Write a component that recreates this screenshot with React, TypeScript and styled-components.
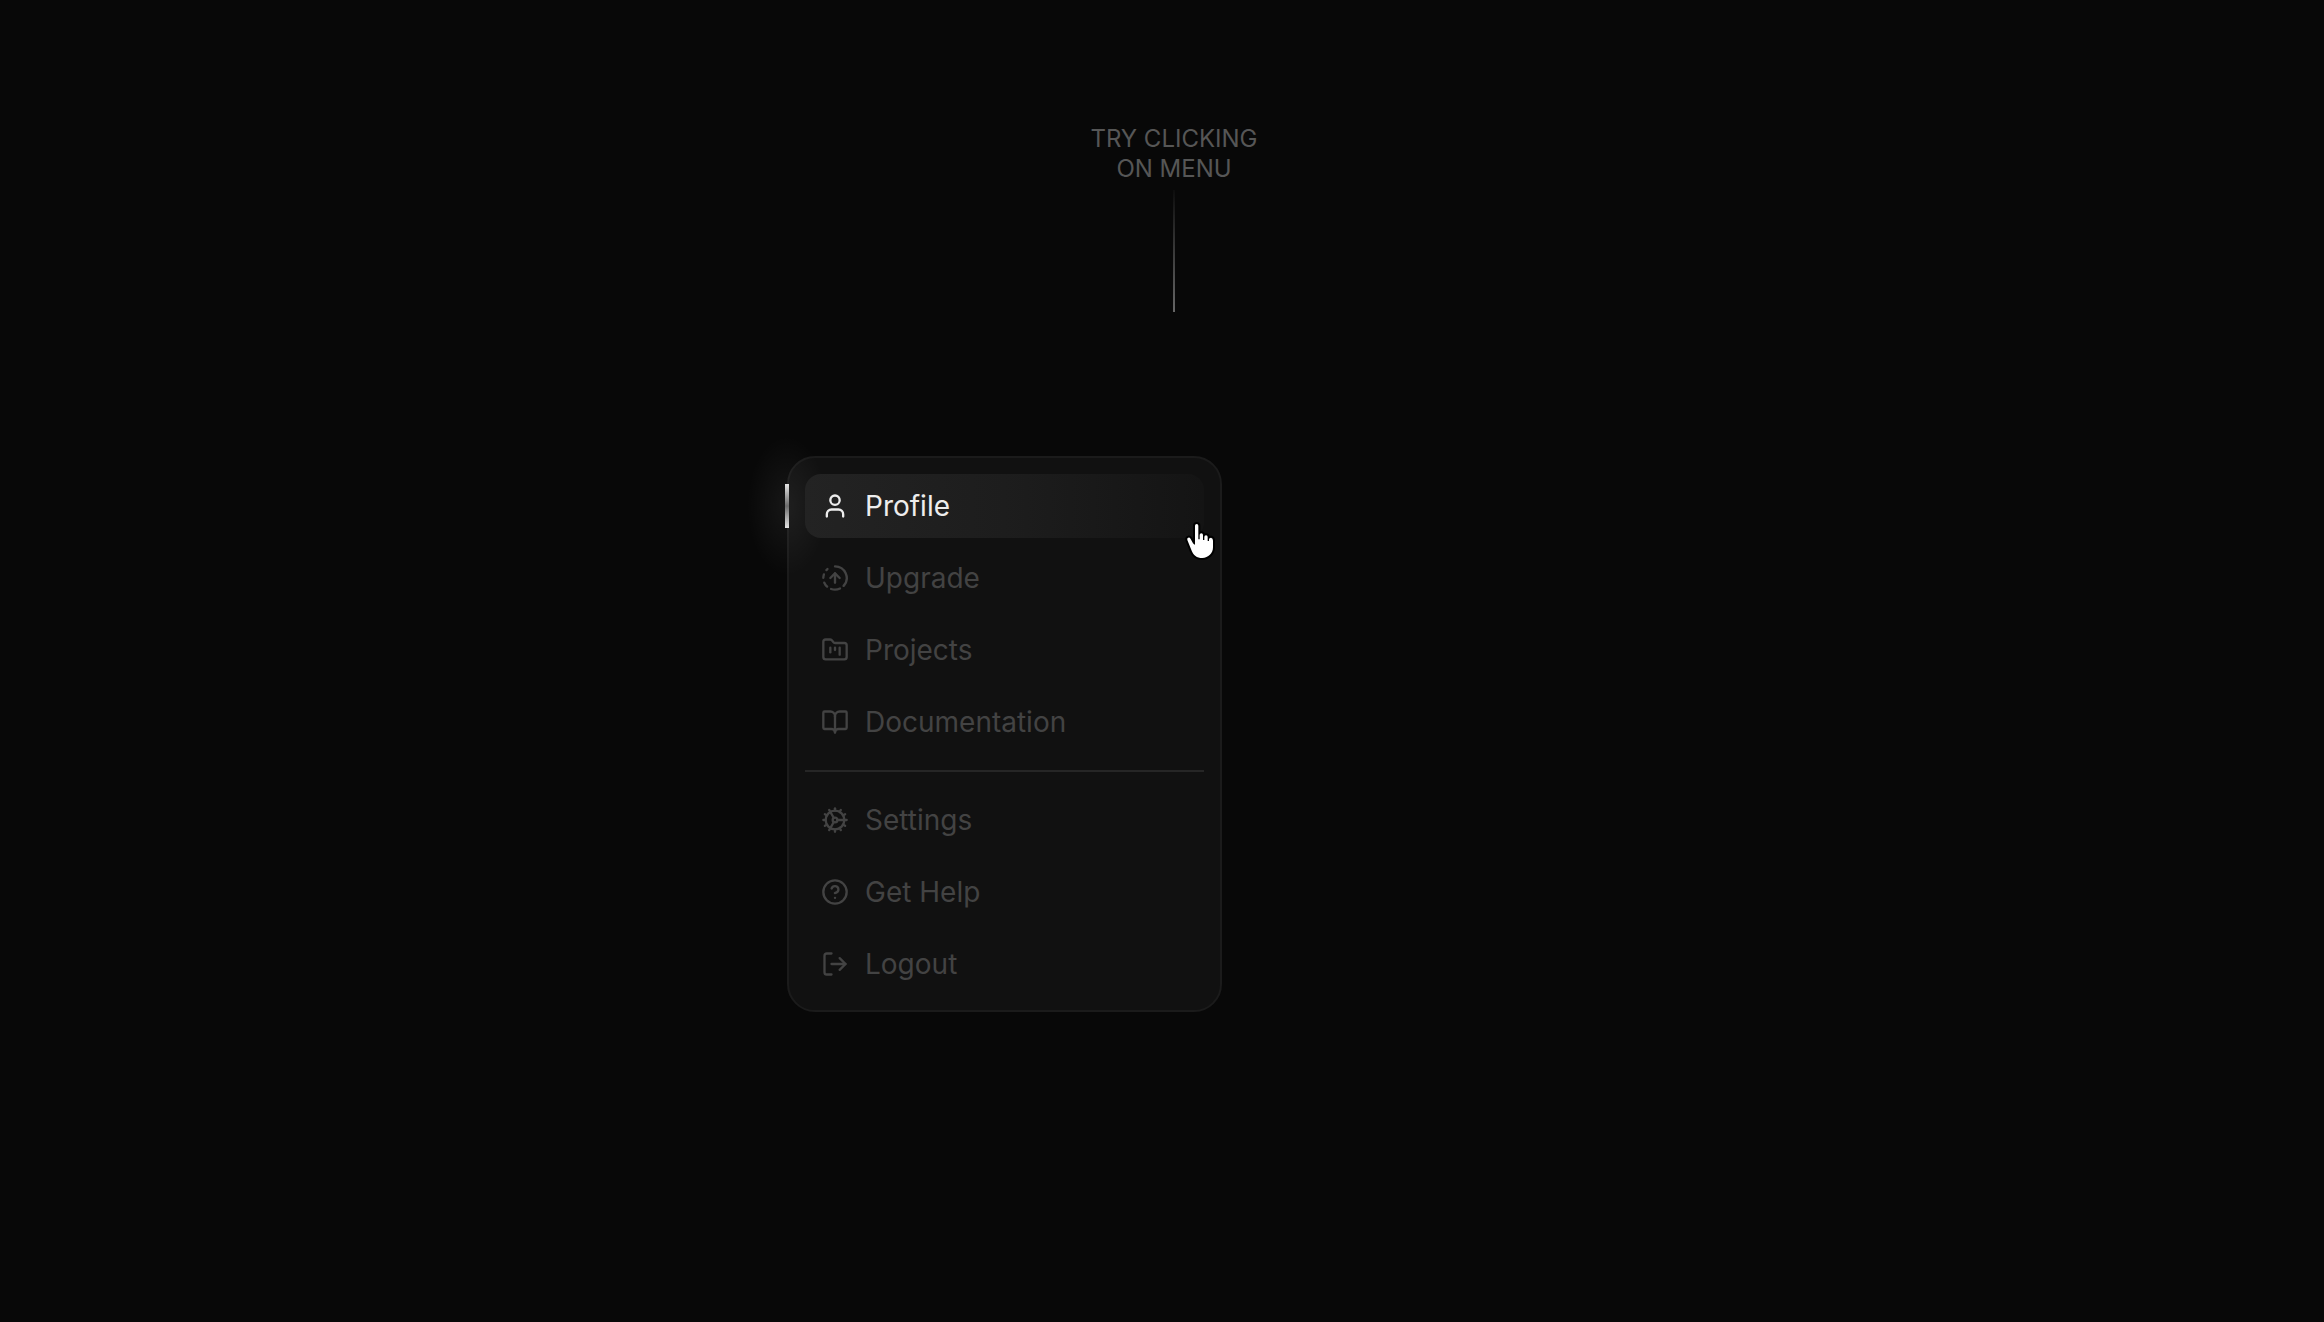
import React from "react";
import styled, { createGlobalStyle } from "styled-components";
import {
  BookOpen,
  CircleFadingArrowUp,
  CircleHelp,
  Cog,
  FolderKanban,
  LogOut,
  User,
  type LucideIcon,
} from "lucide-react";

const GlobalStyle = createGlobalStyle`
  * { box-sizing: border-box; }
  body {
    margin: 0;
    background: #080808;
    font-family: Inter, "Liberation Sans", sans-serif;
  }
`;

const Page = styled.main`
  min-height: 100vh;
  display: flex;
  flex-direction: column;
  align-items: center;
  padding: 124px 0 0 24px;
`;

const Stage = styled.div`
  width: 100%;
  max-width: 774px;
  display: flex;
  flex-direction: column;
`;

const Hint = styled.div`
  display: flex;
  flex-direction: column;
  align-items: center;
  gap: 6px;
`;

const HintText = styled.p`
  margin: 0;
  color: #565656;
  font-size: 24px;
  font-weight: 400;
  line-height: 30px;
  text-align: center;
`;

const HintLine = styled.div`
  width: 2px;
  height: 122px;
  background: linear-gradient(to bottom, #0d0d0d, #666);
`;

const Menu = styled.nav`
  position: relative;
  align-self: flex-start;
  width: 435px;
  margin-top: 144px;
  padding: 16px 16px 14px;
  border: 2px solid #1b1b1b;
  border-radius: 28px;
  background: #111;
`;

const Glow = styled.span`
  position: absolute;
  top: -22px;
  left: -42px;
  width: 80px;
  height: 140px;
  background: radial-gradient(closest-side, rgba(255, 255, 255, 0.06), transparent);
  pointer-events: none;
`;

const Marker = styled.span`
  position: absolute;
  top: 26px;
  left: -4px;
  width: 4px;
  height: 44px;
  background: linear-gradient(to bottom, #e4e4e4, #6c6c6c 50%, #e4e4e4);
`;

const List = styled.ul`
  display: flex;
  flex-direction: column;
  gap: 8px;
  margin: 0;
  padding: 0;
  list-style: none;
`;

const Divider = styled.hr`
  height: 2px;
  margin: 16px 0;
  border: 0;
  background: #262626;
`;

const MenuButton = styled.button<{ $active: boolean }>`
  position: relative;
  display: flex;
  align-items: center;
  gap: 16px;
  width: 100%;
  height: 64px;
  padding: 0 16px;
  border: 0;
  border-radius: 16px;
  background: ${(p) =>
    p.$active ? "linear-gradient(to right, #232323, #1d1d1d 50%, #141414)" : "transparent"};
  color: ${(p) => (p.$active ? "#ededed" : "#434343")};
  font-family: inherit;
  font-size: 28px;
  font-weight: 400;
  line-height: 36px;
  text-align: left;
  cursor: pointer;
`;

const Pointer = styled.svg`
  position: absolute;
  top: 63px;
  right: 4px;
  width: 32px;
  height: 40px;
  pointer-events: none;
`;

type Item = { label: string; Icon: LucideIcon };

const primary: Item[] = [
  { label: "Profile", Icon: User },
  { label: "Upgrade", Icon: CircleFadingArrowUp },
  { label: "Projects", Icon: FolderKanban },
  { label: "Documentation", Icon: BookOpen },
];

const secondary: Item[] = [
  { label: "Settings", Icon: Cog },
  { label: "Get Help", Icon: CircleHelp },
  { label: "Logout", Icon: LogOut },
];

function MenuGroup({ items, active }: { items: Item[]; active: string }) {
  return (
    <List>
      {items.map(({ label, Icon }) => (
        <li key={label}>
          <MenuButton type="button" $active={label === active}>
            <Icon size={28} strokeWidth={2} aria-hidden />
            {label}
          </MenuButton>
        </li>
      ))}
    </List>
  );
}

export default function App() {
  return (
    <>
      <GlobalStyle />
      <Page>
        <Stage>
          <Hint>
            <HintText>
              TRY CLICKING
              <br />
              ON MENU
            </HintText>
            <HintLine />
          </Hint>
          <Menu aria-label="Account">
            <Glow />
            <Marker />
            <MenuGroup items={primary} active="Profile" />
            <Divider />
            <MenuGroup items={secondary} active="Profile" />
            <Pointer viewBox="-9 -9 96 120" aria-hidden>
              <path
                d="M24 5 Q24 0 29 0 Q34 0 34 5 V46 H38 V33 Q38 28 43 28 Q48 28 48 33 V48 H52 V39 Q52 34 57 34 Q62 34 62 39 V51 H66 V46 Q66 41 72 41 Q78 42 78 50 V70 C78 88 64 102 46 102 C29 102 19 93 14 80 L1 48 Q-1 42 4 41 Q8 40 11 45 L18 58 Q21 62 24 62 Z"
                fill="#fff"
                stroke="#000"
                strokeWidth="12"
                strokeLinejoin="round"
                paintOrder="stroke"
              />
            </Pointer>
          </Menu>
        </Stage>
      </Page>
    </>
  );
}
